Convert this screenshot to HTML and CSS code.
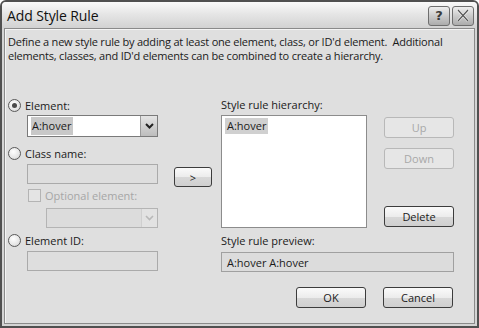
FILE: index.html
```html
<!DOCTYPE html>
<html lang="en">
<head>
    <meta charset="UTF-8">
    <title>Add Style Rule</title>
    <link rel="stylesheet" href="styles.css">
</head>
<body>
    <div class="window">
        <div class="titlebar">
            <span class="title">Add Style Rule</span>
            <div class="caption-buttons">
                <span class="cap-btn">?</span>
                <span class="cap-btn cap-close">
                    <svg width="14" height="13" viewBox="0 0 14 13"><path d="M2 1 L12 12 M12 1 L2 12" stroke="#f4f4f4" stroke-width="2.6"/><path d="M2 1 L12 12 M12 1 L2 12" stroke="#555" stroke-width="1.2"/></svg>
                </span>
            </div>
        </div>

        <div class="content">
            <p class="intro">Define a new style rule by adding at least one element, class, or ID'd element.&nbsp; Additional<br>elements, classes, and ID'd elements can be combined to create a hierarchy.</p>

            <div class="main">
                <div class="left">
                    <div class="radio-row">
                        <span class="radio checked"></span>
                        <span>Element:</span>
                    </div>
                    <div class="select">
                        <span class="select-text"><span class="selected">A:hover</span></span>
                        <span class="select-arrow">
                            <svg width="9" height="6" viewBox="0 0 9 6"><path d="M1 1 L4.5 4.5 L8 1" fill="none" stroke="#222" stroke-width="2"/></svg>
                        </span>
                    </div>

                    <div class="radio-row row-class">
                        <span class="radio"></span>
                        <span>Class name:</span>
                    </div>
                    <div class="field disabled"></div>

                    <div class="check-row">
                        <span class="checkbox"></span>
                        <span class="muted">Optional element:</span>
                    </div>
                    <div class="select small disabled">
                        <span class="select-text"></span>
                        <span class="select-arrow">
                            <svg width="9" height="6" viewBox="0 0 9 6"><path d="M1 1 L4.5 4.5 L8 1" fill="none" stroke="#b8b8b8" stroke-width="1.6"/></svg>
                        </span>
                    </div>

                    <div class="radio-row row-id">
                        <span class="radio"></span>
                        <span>Element ID:</span>
                    </div>
                    <div class="field disabled"></div>
                </div>

                <div class="middle">
                    <button class="btn btn-add">&gt;</button>
                </div>

                <div class="right">
                    <div class="label">Style rule hierarchy:</div>
                    <div class="hierarchy">
                        <div class="listbox">
                            <span class="list-item">A:hover</span>
                        </div>
                        <div class="side-buttons">
                            <button class="btn" disabled>Up</button>
                            <button class="btn" disabled>Down</button>
                            <button class="btn btn-delete">Delete</button>
                        </div>
                    </div>
                    <div class="label label-preview">Style rule preview:</div>
                    <div class="preview">A:hover A:hover</div>
                    <div class="actions">
                        <button class="btn">OK</button>
                        <button class="btn">Cancel</button>
                    </div>
                </div>
            </div>
        </div>
    </div>
</body>
</html>
```

FILE: styles.css
```css
* {
    margin: 0;
    padding: 0;
    box-sizing: border-box;
}

body {
    font-family: "Open Sans", "Liberation Sans", sans-serif;
    font-size: 11px;
    color: #1a1a1a;
    background: #ffffff;
}

.window {
    width: 479px;
    height: 328px;
    border: 2px solid #505050;
    border-radius: 6px 6px 0 0;
    background: #d4d4d4;
    display: flex;
    flex-direction: column;
    overflow: hidden;
}

.titlebar {
    height: 26px;
    display: flex;
    align-items: center;
    justify-content: space-between;
    padding: 0 3px 0 5px;
    background: linear-gradient(to bottom, #fafafa 0%, #e6e6e6 45%, #d2d2d2 100%);
}

.title {
    font-size: 14px;
    color: #111;
    letter-spacing: -0.1px;
}

.caption-buttons {
    display: flex;
    gap: 2px;
    margin-top: 1px;
}

.cap-btn {
    width: 22px;
    height: 20px;
    border: 1px solid #6e6e6e;
    border-radius: 3px;
    background: linear-gradient(to bottom, #eeeeee 0%, #cacaca 50%, #acacac 100%);
    display: flex;
    align-items: center;
    justify-content: center;
    font-family: "DejaVu Sans", sans-serif;
    font-weight: bold;
    font-size: 13px;
    color: #3a3a3a;
}

.content {
    flex: 1;
    margin: 0 2px 2px 2px;
    border: 1px solid #8a8a8a;
    box-shadow: inset 1px 1px 0 #f4f4f4;
    background: #dfdfdf;
    padding: 6px 0 0 3px;
}

.intro {
    line-height: 14px;
    white-space: nowrap;
    letter-spacing: -0.2px;
}

.main {
    display: flex;
    margin-top: 35px;
}

.left {
    width: 158px;
    display: flex;
    flex-direction: column;
}

.radio-row,
.check-row {
    display: flex;
    align-items: center;
    gap: 4px;
    height: 14px;
}

.radio {
    width: 13px;
    height: 13px;
    border-radius: 50%;
    border: 1px solid #5a5a5a;
    background: radial-gradient(circle at 40% 35%, #ffffff 0%, #e6e6e6 60%, #c8c8c8 100%);
    position: relative;
}

.radio.checked::after {
    content: "";
    position: absolute;
    left: 3px;
    top: 3px;
    width: 5px;
    height: 5px;
    border-radius: 50%;
    background: #4a4a4a;
}

.select {
    margin: 3px 0 0 19px;
    width: 131px;
    height: 22px;
    border: 1px solid #7a7a7a;
    background: #ffffff;
    display: flex;
}

.select-text {
    flex: 1;
    padding: 2px 0 0 3px;
}

.selected {
    background: #c8c8c8;
    padding: 1px 2px 2px 1px;
}

.select-arrow {
    width: 17px;
    border-left: 1px solid #9a9a9a;
    background: linear-gradient(to bottom, #e4e4e4, #bdbdbd);
    display: flex;
    align-items: center;
    justify-content: center;
}

.row-class {
    margin-top: 9px;
}

.field {
    margin: 4px 0 0 19px;
    width: 131px;
    height: 20px;
    border: 1px solid #aaaaaa;
    background: #dedede;
}

.check-row {
    margin: 4px 0 0 20px;
    height: 14px;
}

.checkbox {
    width: 13px;
    height: 13px;
    border: 1px solid #b4b4b4;
    background: #e4e4e4;
}

.muted {
    color: #a6a6a6;
}

.select.small {
    margin: 6px 0 0 38px;
    width: 112px;
    height: 20px;
    border-color: #b4b4b4;
    background: #dcdcdc;
}

.select.small .select-arrow {
    width: 16px;
    border-left: 1px solid #cfcfcf;
    background: #e2e2e2;
}

.row-id {
    margin-top: 5px;
}

.middle {
    width: 55px;
    padding: 69px 0 0 8px;
}

.btn {
    width: 70px;
    height: 21px;
    border: 1px solid #3c3c3c;
    border-radius: 3px;
    background: linear-gradient(to bottom, #fafafa 0%, #ececec 50%, #d8d8d8 51%, #cfcfcf 100%);
    font-family: inherit;
    font-size: 11px;
    color: #1a1a1a;
}

.btn:disabled {
    border-color: #b8b8b8;
    background: #e6e6e6;
    color: #a8a8a8;
}

.btn-add {
    width: 38px;
    height: 20px;
}

.right {
    width: 233px;
    display: flex;
    flex-direction: column;
}

.label {
    height: 14px;
    line-height: 14px;
}

.hierarchy {
    display: flex;
    justify-content: space-between;
    margin-top: 3px;
}

.listbox {
    width: 146px;
    height: 113px;
    border: 1px solid #8c8c8c;
    background: #ffffff;
    padding: 2px 3px;
}

.list-item {
    display: inline-block;
    background: #d0d0d0;
    padding: 0 2px 1px 2px;
}

.side-buttons {
    display: flex;
    flex-direction: column;
    padding-top: 2px;
    gap: 10px;
}

.side-buttons .btn-delete {
    margin-top: 27px;
}

.label-preview {
    margin-top: 6px;
}

.preview {
    margin-top: 4px;
    height: 20px;
    border: 1px solid #a0a0a0;
    background: #dcdcdc;
    padding: 2px 5px;
}

.actions {
    display: flex;
    justify-content: flex-end;
    gap: 17px;
    margin-top: 15px;
    padding-right: 1px;
}
```
